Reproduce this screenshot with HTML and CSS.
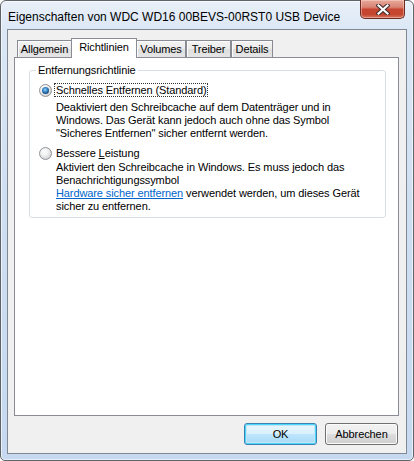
FILE: index.html
```html
<!DOCTYPE html>
<html lang="de">
<head>
  <meta charset="UTF-8">
  <title>Eigenschaften von WDC WD16 00BEVS-00RST0 USB Device</title>
  <link rel="stylesheet" href="styles.css">
</head>
<body>

  <div class="window">

    <div class="titlebar">
      <span class="title">Eigenschaften von WDC WD16 00BEVS-00RST0 USB Device</span>
      <div class="close">
        <svg width="14" height="11" viewBox="0 0 14 11">
          <path d="M2.5 1.5 L11.5 9.5 M11.5 1.5 L2.5 9.5" stroke="#3b2a2a" stroke-width="4.2" stroke-linecap="square"/>
          <path d="M2.5 1.5 L11.5 9.5 M11.5 1.5 L2.5 9.5" stroke="#ffffff" stroke-width="2.2" stroke-linecap="square"/>
        </svg>
      </div>
    </div>

    <div class="client">

      <div class="tabs">
        <div class="tab tab-allgemein">Allgemein</div>
        <div class="tab tab-richtlinien active">Richtlinien</div>
        <div class="tab tab-volumes">Volumes</div>
        <div class="tab tab-treiber">Treiber</div>
        <div class="tab tab-details">Details</div>
      </div>

      <div class="panel">
        <fieldset class="group">
          <legend>Entfernungsrichtlinie</legend>

          <div class="option first">
            <span class="radio checked"></span>
            <span class="label focused">Schnelles Entfernen (Standard)</span>
          </div>
          <p class="desc first">
            Deaktiviert den Schreibcache auf dem Datenträger und in<br>
            Windows. Das Gerät kann jedoch auch ohne das Symbol<br>
            "Sicheres Entfernen" sicher entfernt werden.
          </p>

          <div class="option second">
            <span class="radio"></span>
            <span class="label">Bessere <u>L</u>eistung</span>
          </div>
          <p class="desc second">
            Aktiviert den Schreibcache in Windows. Es muss jedoch das<br>
            Benachrichtigungssymbol<br>
            <a href="#">Hardware sicher entfernen</a> verwendet werden, um dieses Gerät<br>
            sicher zu entfernen.
          </p>
        </fieldset>
      </div>

      <div class="buttons">
        <button class="btn default">OK</button>
        <button class="btn">Abbrechen</button>
      </div>

    </div>
  </div>

</body>
</html>
```

FILE: styles.css
```css
html, body {
  margin: 0;
  padding: 0;
  background: #ffffff;
}

body {
  font-family: "Liberation Sans", Arial, sans-serif;
  font-size: 11px;
  letter-spacing: -0.1px;
  color: #000;
}

/* window frame */
.window {
  box-sizing: border-box;
  width: 414px;
  height: 461px;
  border: 1px solid #5f6469;
  border-radius: 6px 6px 5px 5px;
  background: linear-gradient(to bottom, #e9f0f9 0px, #dbe7f5 30px, #cfdff2 200px, #c6d9f0 100%);
  padding: 0 6px 6px 6px;
  display: flex;
  flex-direction: column;
  box-shadow: inset 0 0 0 1px rgba(255, 255, 255, 0.6);
}

.titlebar {
  height: 28px;
  display: flex;
  align-items: flex-start;
  justify-content: space-between;
}

.title {
  margin-top: 9px;
  margin-left: 1px;
  font-size: 12px;
  letter-spacing: 0;
  color: #000;
  white-space: nowrap;
}

.close {
  width: 43px;
  height: 18px;
  margin-top: -1px;
  margin-right: 2px;
  border: 1px solid #6b2a20;
  border-top: none;
  border-radius: 0 0 5px 5px;
  background: linear-gradient(to bottom, #e8aa9c 0%, #d98373 40%, #c74530 52%, #c4452f 80%, #d67560 100%);
  box-shadow: inset 0 0 0 1px rgba(255, 220, 210, 0.45);
  display: flex;
  align-items: center;
  justify-content: center;
}

.client {
  flex: 1;
  border: 1px solid #7f8893;
  background: #f0f0f0;
  padding: 8px 7px 8px 6px;
  display: flex;
  flex-direction: column;
}

/* tabs */
.tabs {
  display: flex;
  align-items: flex-end;
  height: 19px;
  position: relative;
  z-index: 1;
}

.tab {
  box-sizing: border-box;
  height: 17px;
  border: 1px solid #898c95;
  border-bottom: none;
  background: linear-gradient(to bottom, #f3f3f3 0%, #ebebeb 50%, #dedede 51%, #e5e5e5 100%);
  box-shadow: inset 1px 1px 0 #fcfcfc;
  text-align: center;
  line-height: 16px;
  color: #000;
}

.tab-allgemein { width: 55px; margin-left: 3px; }
.tab-volumes   { width: 50px; }
.tab-treiber   { width: 45px; }
.tab-details   { width: 42px; }

.tab.active {
  width: 66px;
  height: 20px;
  margin-left: -1px;
  margin-right: -1px;
  margin-bottom: -1px;
  background: #ffffff;
  box-shadow: none;
  line-height: 16px;
}

.panel {
  flex: 1;
  border: 1px solid #898c95;
  background: #ffffff;
  padding: 6px 12px 0 14px;
}

/* group box */
.group {
  margin: 0;
  padding: 0 0 4px 0;
  border: 1px solid #d5dfe5;
  border-radius: 3px;
}

.group legend {
  margin-left: 6px;
  padding: 0 2px;
  line-height: 13px;
}

.option {
  display: flex;
  align-items: center;
  padding-left: 9px;
  height: 14px;
}

.option.first { margin-top: 6px; }
.option.second { margin-top: 6px; }

.radio {
  box-sizing: border-box;
  width: 13px;
  height: 13px;
  border-radius: 50%;
  border: 1px solid #8f9399;
  background: radial-gradient(circle at 40% 35%, #ffffff 0%, #f2f2f2 35%, #d4d4d4 75%, #c6c6c6 100%);
  margin-right: 2px;
  position: relative;
}

.radio.checked::after {
  content: "";
  position: absolute;
  left: 2px;
  top: 2px;
  width: 7px;
  height: 7px;
  border-radius: 50%;
  background: radial-gradient(circle at 45% 40%, #9fd4f5 0%, #3c8fd0 35%, #174a7c 70%, #0c2b4d 100%);
}

.label {
  padding: 0 1px;
  line-height: 12px;
  border: 1px solid transparent;
}

.label.focused {
  border: 1px dotted #333;
}

.desc {
  margin: 0;
  padding-left: 26px;
  line-height: 13px;
  white-space: nowrap;
}

.desc.first { margin-top: 4px; }
.desc.second { margin-top: 1px; }

.desc a {
  color: #0066cc;
  text-decoration: underline;
}

/* dialog buttons */
.buttons {
  display: flex;
  justify-content: flex-end;
  gap: 8px;
  margin-top: 7px;
  padding-right: 1px;
}

.btn {
  box-sizing: border-box;
  width: 73px;
  height: 22px;
  font-family: "Liberation Sans", Arial, sans-serif;
  font-size: 11px;
  letter-spacing: -0.1px;
  color: #000;
  border: 1px solid #707070;
  border-radius: 3px;
  background: linear-gradient(to bottom, #f2f2f2 0%, #ebebeb 50%, #dddddd 51%, #cfcfcf 100%);
  box-shadow: inset 0 0 0 1px #fbfbfb;
  padding: 0;
}

.btn.default {
  border-color: #3c7fb1;
  box-shadow: inset 0 0 0 1px #48d8fb, inset 0 0 0 2px #c2e4f6;
  background: linear-gradient(to bottom, #eaf6fd 0%, #d9f0fc 50%, #bee6fd 51%, #a7d9f5 100%);
}
```
